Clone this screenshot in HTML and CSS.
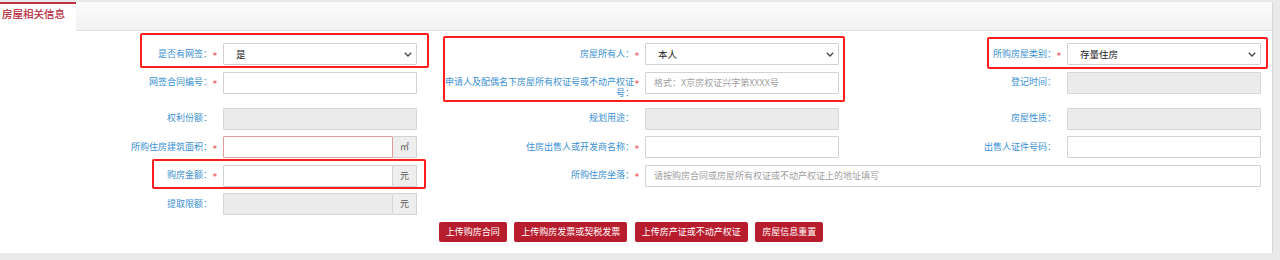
FILE: index.html
```html
<!DOCTYPE html>
<html lang="zh-CN">
<head>
<meta charset="utf-8">
<title>房屋相关信息</title>
<link rel="stylesheet" href="styles.css">
</head>
<body>
<div class="page">
  <div class="panel">
    <div class="tabbar">
      <div class="tab">房屋相关信息</div>
      <div class="tabfill"></div>
    </div>
    <div class="form">
      <div class="grid">
        <!-- row 1 -->
        <div class="field">
          <label class="lbl">是否有网签：</label><span class="star">*</span>
          <div class="ctl sel" role="combobox" tabindex="0">
            <span class="selval">是</span>
            <svg class="chev" width="8" height="5" viewBox="0 0 8 5"><path d="M0.8 0.8 L4 4 L7.2 0.8" fill="none" stroke="#444" stroke-width="1.3"/></svg>
          </div>
        </div>
        <div class="field">
          <label class="lbl">房屋所有人：</label><span class="star">*</span>
          <div class="ctl sel" role="combobox" tabindex="0">
            <span class="selval">本人</span>
            <svg class="chev" width="8" height="5" viewBox="0 0 8 5"><path d="M0.8 0.8 L4 4 L7.2 0.8" fill="none" stroke="#444" stroke-width="1.3"/></svg>
          </div>
        </div>
        <div class="field">
          <label class="lbl">所购房屋类别：</label><span class="star">*</span>
          <div class="ctl sel" role="combobox" tabindex="0">
            <span class="selval">存量住房</span>
            <svg class="chev" width="8" height="5" viewBox="0 0 8 5"><path d="M0.8 0.8 L4 4 L7.2 0.8" fill="none" stroke="#444" stroke-width="1.3"/></svg>
          </div>
        </div>
        <!-- row 2 -->
        <div class="field">
          <label class="lbl">网签合同编号：</label><span class="star">*</span>
          <input class="ctl" type="text">
        </div>
        <div class="field">
          <label class="lbl">申请人及配偶名下房屋所有权证号或不动产权证号：</label><span class="star">*</span>
          <input class="ctl" type="text" placeholder="格式：X京房权证兴字第XXXX号">
        </div>
        <div class="field">
          <label class="lbl">登记时间：</label><span class="star"></span>
          <input class="ctl" type="text" disabled>
        </div>
        <!-- row 3 -->
        <div class="field">
          <label class="lbl">权利份额：</label><span class="star"></span>
          <input class="ctl" type="text" disabled>
        </div>
        <div class="field">
          <label class="lbl">规划用途：</label><span class="star"></span>
          <input class="ctl" type="text" disabled>
        </div>
        <div class="field">
          <label class="lbl">房屋性质：</label><span class="star"></span>
          <input class="ctl" type="text" disabled>
        </div>
        <!-- row 4 -->
        <div class="field">
          <label class="lbl">所购住房建筑面积：</label><span class="star">*</span>
          <div class="group">
            <input class="ctl in error" type="text"><span class="addon">㎡</span>
          </div>
        </div>
        <div class="field">
          <label class="lbl">住房出售人或开发商名称：</label><span class="star">*</span>
          <input class="ctl" type="text">
        </div>
        <div class="field">
          <label class="lbl">出售人证件号码：</label><span class="star"></span>
          <input class="ctl" type="text">
        </div>
        <!-- row 5 -->
        <div class="field">
          <label class="lbl">购房金额：</label><span class="star">*</span>
          <div class="group">
            <input class="ctl in" type="text"><span class="addon">元</span>
          </div>
        </div>
        <div class="field wide">
          <label class="lbl">所购住房坐落：</label><span class="star">*</span>
          <input class="ctl grow" type="text" placeholder="请按购房合同或房屋所有权证或不动产权证上的地址填写">
        </div>
        <!-- row 6 -->
        <div class="field">
          <label class="lbl">提取限额：</label><span class="star"></span>
          <div class="group">
            <input class="ctl in" type="text" disabled><span class="addon">元</span>
          </div>
        </div>
      </div>
      <div class="actions">
        <button class="btn" type="button">上传购房合同</button>
        <button class="btn" type="button">上传购房发票或契税发票</button>
        <button class="btn" type="button">上传房产证或不动产权证</button>
        <button class="btn" type="button">房屋信息重置</button>
      </div>
    </div>
  </div>
  <div class="mark mark1"></div>
  <div class="mark mark2"></div>
  <div class="mark mark3"></div>
  <div class="mark mark4"></div>
</div>
</body>
</html>
```
FILE: styles.css
```css
* { box-sizing: border-box; }

html, body {
  margin: 0;
  padding: 0;
  background: #e9e9e9;
  font-family: "Noto Sans CJK SC", "Microsoft YaHei", sans-serif;
}

.page {
  position: relative;
  width: 1280px;
  height: 260px;
  padding-top: 2px;
}

.panel {
  width: 1273px;
  height: 251px;
  background: #fff;
  border-right: 1px solid #d8d8d8;
}

.tabbar {
  display: flex;
  height: 29px;
}

.tab {
  width: 76px;
  flex: none;
  border-top: 2px solid #c23040;
  background: #fff;
  color: #b8283a;
  font-size: 10.5px;
  line-height: 12px;
  padding: 4px 0 0 2px;
  -webkit-text-stroke: 0.2px #b8283a;
}

.tabfill {
  flex: 1;
  background: linear-gradient(#fbfbfb, #f2f2f2);
  border-bottom: 1px solid #e1e1e1;
}

.form {
  padding: 12px 10px 0 0;
}

.grid {
  display: grid;
  grid-template-columns: repeat(3, 399px);
  column-gap: 23px;
  row-gap: 6.5px;
  padding-left: 18px;
}

.field {
  display: flex;
  align-items: flex-start;
}

.field.wide {
  grid-column: span 2;
}

.lbl {
  width: 194px;
  flex: none;
  text-align: right;
  color: #3a8fd1;
  font-size: 9px;
  line-height: 11px;
  padding: 4.5px 0 3px 0;
}

.star {
  width: 11px;
  flex: none;
  color: #e8333a;
  font-size: 9.5px;
  line-height: 11px;
  padding-top: 6.5px;
  padding-left: 0.5px;
  font-family: "DejaVu Sans", sans-serif;
}

.ctl {
  width: 194px;
  height: 22px;
  flex: none;
  margin: 0;
  border: 1px solid #d2d2d2;
  border-radius: 1px;
  background: #fff;
  color: #333;
  font-family: "Noto Sans CJK SC", "Microsoft YaHei", sans-serif;
  font-size: 9px;
  padding: 0 8px;
  outline: none;
}

.ctl::placeholder {
  color: #a0a0a0;
}

.ctl:disabled {
  background: #ebebeb;
  border-color: #d6d6d6;
}

.ctl.grow {
  width: 616px;
}

.sel {
  display: flex;
  align-items: center;
  justify-content: space-between;
  padding: 0 4px 0 12px;
  color: #222;
  font-size: 9.5px;
}

.selval {
  line-height: 12px;
}

.chev {
  flex: none;
  margin-top: 1px;
}

.group {
  display: flex;
  width: 194px;
  height: 22px;
  flex: none;
}

.group .in {
  width: 170px;
}

.group .in.error {
  border-color: #e39a9a;
}

.addon {
  width: 24px;
  height: 22px;
  border: 1px solid #d2d2d2;
  border-left: none;
  background: #eeeeee;
  color: #555;
  font-size: 9px;
  line-height: 20px;
  text-align: center;
}

.actions {
  display: flex;
  justify-content: center;
  gap: 7.5px;
  margin-top: 6.5px;
}

.btn {
  height: 20px;
  padding: 0 7px;
  border: none;
  border-radius: 2px;
  background: #b81d2e;
  color: #fff;
  font-family: "Noto Sans CJK SC", "Microsoft YaHei", sans-serif;
  font-size: 9px;
  line-height: 20px;
}

.mark {
  position: absolute;
  border: 2px solid #ff1e1e;
  border-radius: 2px;
  pointer-events: none;
}

.mark1 { left: 140px; top: 33px; width: 289px; height: 35px; }
.mark2 { left: 443px; top: 36px; width: 402px; height: 66px; }
.mark3 { left: 987px; top: 37px; width: 281px; height: 32px; }
.mark4 { left: 152px; top: 159px; width: 274px; height: 30px; }
```
